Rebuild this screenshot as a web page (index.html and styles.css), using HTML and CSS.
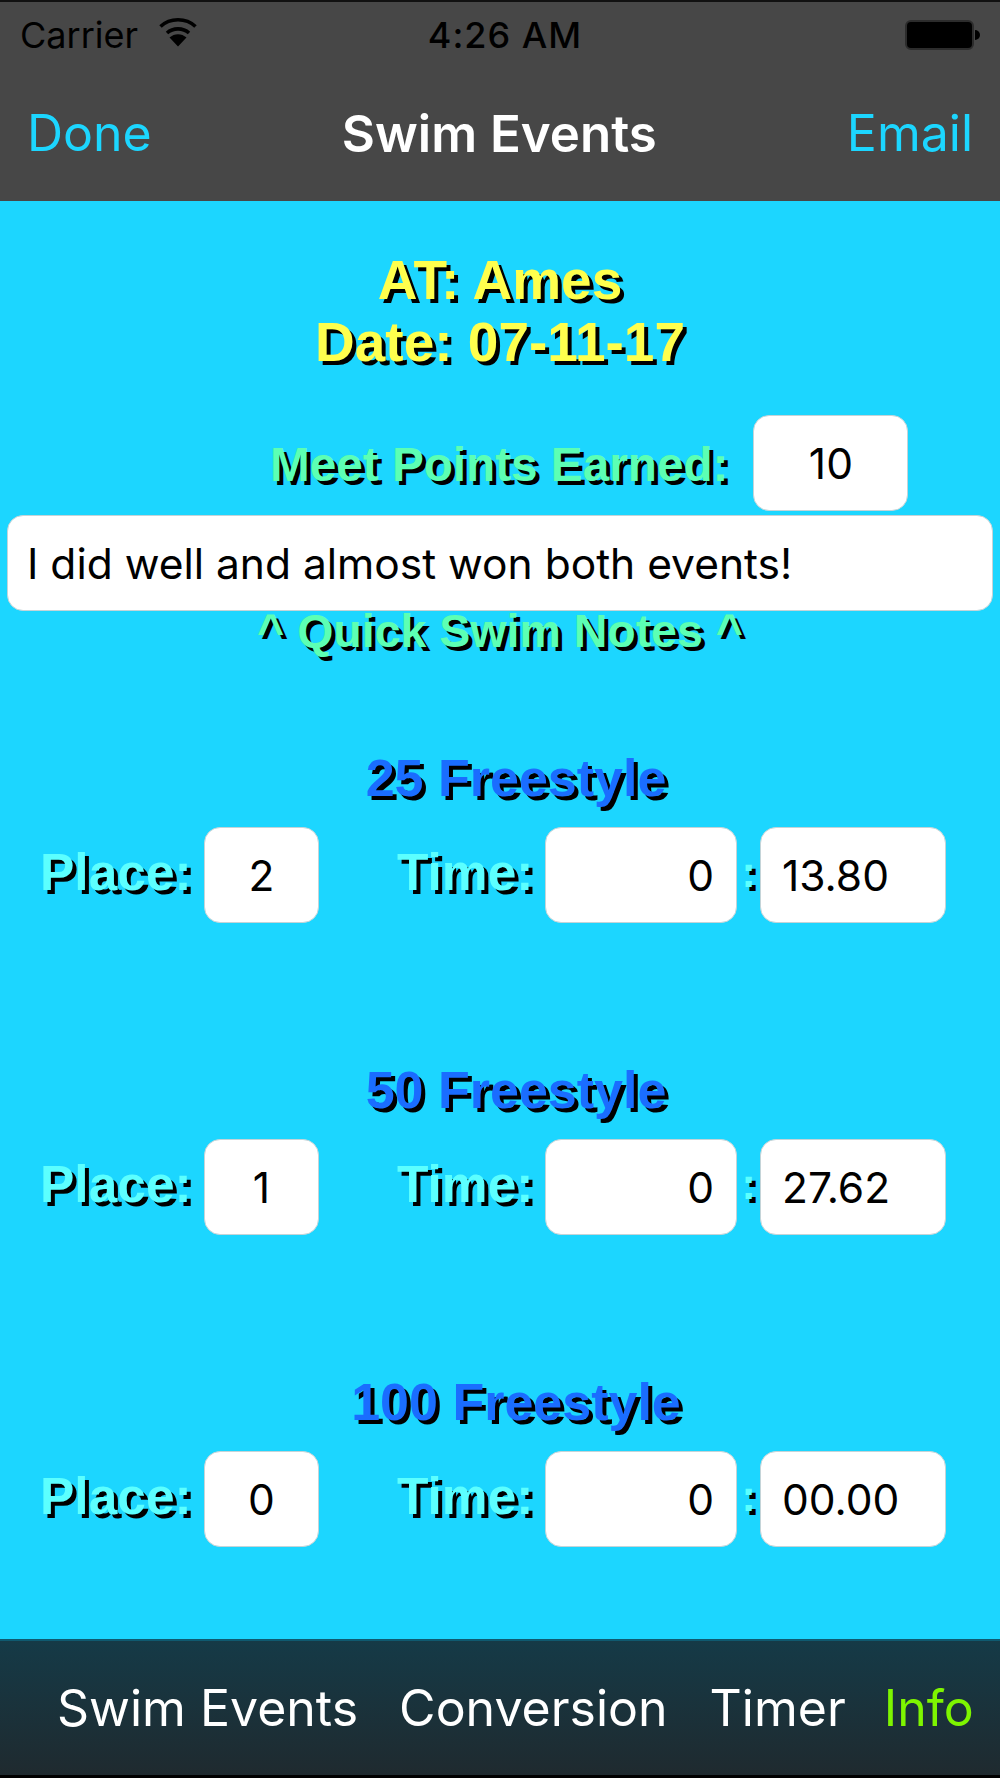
FILE: index.html
```html
<!DOCTYPE html>
<html>

<head>
    <meta charset="UTF-8">
    <meta name="viewport" content="width=device-width, initial-scale=1.0">
    <link rel="stylesheet" href="styles.css">
    <title>Swim Events</title>
</head>

<body>

    <div class="top-bar">
        <div class="status-bar">
            <div class="carrier">
                <span>Carrier</span>
                <svg class="wifi" viewBox="0 0 38 30" width="38" height="30">
                    <path d="M1.5 9.5C11 0.5 27 0.5 36.5 9.5" fill="none" stroke="#000" stroke-width="3.6" />
                    <path d="M8 16C14 10.5 24 10.5 30 16" fill="none" stroke="#000" stroke-width="3.6" />
                    <path d="M10.5 20.5C15.5 16 22.5 16 27.5 20.5L19 29.5Z" fill="#000" />
                </svg>
            </div>
            <div class="clock">4:26 AM</div>
            <div class="battery">
                <div class="battery-body"></div>
                <div class="battery-tip"></div>
            </div>
        </div>
        <div class="nav-bar">
            <a href="#done" class="nav-link">Done</a>
            <div class="nav-title">Swim Events</div>
            <a href="#email" class="nav-link">Email</a>
        </div>
    </div>

    <div class="content">
        <div class="meet-title">
            <div>AT: Ames</div>
            <div>Date: 07-11-17</div>
        </div>

        <div class="points-row">
            <div class="note-label">Meet Points Earned:</div>
            <div class="field field-points">10</div>
        </div>
        <div class="field field-notes">I did well and almost won both events!</div>
        <div class="note-label notes-caption">^ Quick Swim Notes ^</div>

        <div class="event">
            <div class="event-name">25 Freestyle</div>
            <div class="event-row">
                <div class="row-label label-place">Place:</div>
                <div class="field field-place">2</div>
                <div class="row-label label-time">Time:</div>
                <div class="field field-min">0</div>
                <div class="row-label colon">:</div>
                <div class="field field-sec">13.80</div>
            </div>
        </div>

        <div class="event">
            <div class="event-name">50 Freestyle</div>
            <div class="event-row">
                <div class="row-label label-place">Place:</div>
                <div class="field field-place">1</div>
                <div class="row-label label-time">Time:</div>
                <div class="field field-min">0</div>
                <div class="row-label colon">:</div>
                <div class="field field-sec">27.62</div>
            </div>
        </div>

        <div class="event">
            <div class="event-name">100 Freestyle</div>
            <div class="event-row">
                <div class="row-label label-place">Place:</div>
                <div class="field field-place">0</div>
                <div class="row-label label-time">Time:</div>
                <div class="field field-min">0</div>
                <div class="row-label colon">:</div>
                <div class="field field-sec">00.00</div>
            </div>
        </div>
    </div>

    <div class="tab-bar">
        <a href="#events" class="tab tab-events">Swim Events</a>
        <a href="#conversion" class="tab tab-conversion">Conversion</a>
        <a href="#timer" class="tab tab-timer">Timer</a>
        <a href="#info" class="tab tab-info">Info</a>
    </div>

</body>

</html>
```

FILE: styles.css
```css
body {
    margin: 0;
    padding: 0;
    height: 1778px;
    display: flex;
    flex-direction: column;
    overflow: hidden;
    background-color: #1cd6ff;
    font-family: "Inter", "Liberation Sans", sans-serif;
}

a {
    text-decoration: none;
}

.top-bar {
    height: 199px;
    flex: none;
    background-color: #474747;
    border-top: 2px solid #111;
}

.status-bar {
    height: 66px;
    padding: 0 20px 0 20px;
    display: flex;
    align-items: center;
    justify-content: space-between;
    color: #000;
    font-size: 36px;
}

.carrier {
    display: flex;
    align-items: center;
    gap: 21px;
    width: 270px;
}

.wifi {
    margin-top: -6px;
}

.clock {
    font-weight: 500;
    letter-spacing: 1px;
}

.battery {
    width: 260px;
    display: flex;
    justify-content: flex-end;
    align-items: center;
}

.battery-body {
    width: 65px;
    height: 26px;
    background-color: #000;
    border: 2px solid #2c2c2c;
    border-radius: 6px;
}

.battery-tip {
    width: 5px;
    height: 10px;
    margin-left: 1px;
    background-color: #000;
    border-radius: 0 5px 5px 0;
}

.nav-bar {
    height: 130px;
    padding: 0 27px 0 27px;
    display: flex;
    align-items: center;
    justify-content: space-between;
    font-size: 50px;
}

.nav-link {
    color: #1cd6ff;
}

.nav-title {
    color: white;
    font-size: 51px;
    font-weight: 600;
}

.content {
    flex: 1;
    text-align: center;
}

.meet-title {
    margin-top: 48px;
    color: #ffff4d;
    font-family: "Liberation Sans", Arial, sans-serif;
    font-weight: bold;
    font-size: 55px;
    line-height: 62px;
    text-shadow: 4px 4px 0 #000;
}

.points-row {
    display: flex;
    align-items: center;
    margin-top: 42px;
    padding-left: 270px;
}

.note-label {
    color: #5cffb4;
    font-family: "Liberation Sans", Arial, sans-serif;
    font-weight: bold;
    font-size: 47.7px;
    padding-top: 3px;
    text-shadow: 4px 4px 0 #000;
}

.notes-caption {
    padding-top: 0;
    font-size: 46.5px;
    line-height: 40px;
}

.field {
    box-sizing: border-box;
    height: 96px;
    display: flex;
    align-items: center;
    background-color: white;
    border: 1px solid #c4d4d8;
    border-radius: 16px;
    color: #000;
    font-size: 42.5px;
}

.field-points {
    width: 155px;
    margin-left: 25px;
    justify-content: center;
}

.field-notes {
    width: 986px;
    margin: 4px 0 0 7px;
    padding-left: 19px;
}

.event {
    margin-top: 98px;
}

.event + .event {
    margin-top: 138px;
}

.event-name {
    padding-left: 32px;
    color: #1a6dff;
    font-family: "Liberation Sans", Arial, sans-serif;
    font-weight: bold;
    font-size: 52px;
    line-height: 58px;
    text-shadow: 4px 4px 0 #000;
}

.event-row {
    display: flex;
    align-items: center;
    margin-top: 20px;
    padding-left: 40px;
}

.row-label {
    padding-bottom: 6px;
    color: #5cffff;
    font-family: "Liberation Sans", Arial, sans-serif;
    font-weight: bold;
    font-size: 51.5px;
    text-shadow: 4px 4px 0 #000;
}

.label-place {
    width: 153px;
    text-align: left;
}

.field-place {
    width: 115px;
    margin-left: 11px;
    justify-content: center;
}

.label-time {
    width: 137px;
    margin-left: 78px;
    text-align: left;
}

.field-min {
    width: 192px;
    margin-left: 11px;
    padding-right: 22px;
    justify-content: flex-end;
}

.colon {
    width: 23px;
    font-size: 44px;
}

.field-sec {
    width: 186px;
    padding-left: 21px;
}

.tab-bar {
    height: 134px;
    flex: none;
    background: linear-gradient(#153a47, #1f2a2f);
    border-top: 2px solid #0f5a70;
    border-bottom: 3px solid #000;
    display: flex;
    align-items: center;
    font-size: 50px;
    padding-left: 57px;
}

.tab {
    color: white;
}

.tab-conversion {
    margin-left: 41px;
}

.tab-timer {
    margin-left: 42px;
}

.tab-info {
    margin-left: 38px;
    color: #7ef500;
}
```
